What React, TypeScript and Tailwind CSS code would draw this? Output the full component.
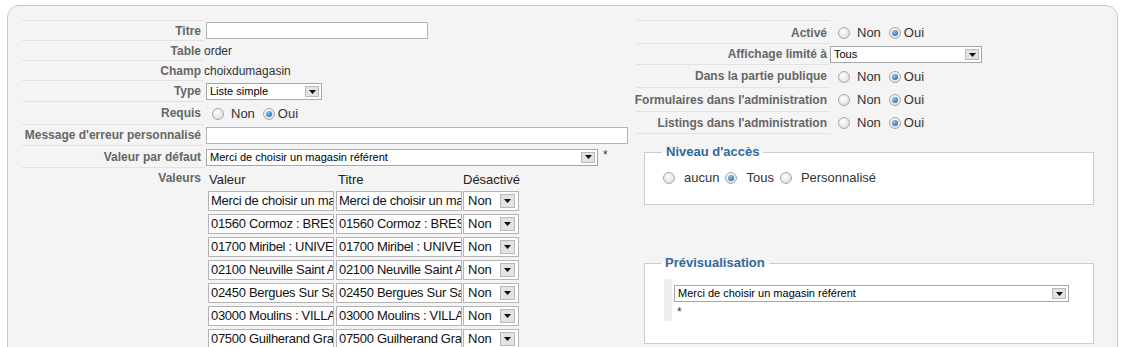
import React from "react";

const arial = "font-['Liberation_Sans',Arial,Helvetica,sans-serif]";

// Windows-style radio button
function Radio({ checked = false, className = "" }: { checked?: boolean; className?: string }) {
  return (
    <span
      className={`inline-flex shrink-0 items-center justify-center w-[12px] h-[12px] rounded-full border border-[#a9a9a9] bg-[radial-gradient(circle_at_40%_35%,#ffffff,#d6d6d6)] ${className}`}
    >
      {checked && (
        <span className="w-[6px] h-[6px] rounded-full bg-[radial-gradient(circle_at_35%_30%,#8ec3ee,#1b5c92)]" />
      )}
    </span>
  );
}

function Arrow({ big = false }: { big?: boolean }) {
  return (
    <span
      className={
        big
          ? "flex shrink-0 items-center justify-center w-[15px] h-[14px] mr-[2px] border border-[#b9b9b9] bg-[#e3e3e3]"
          : "flex shrink-0 items-center justify-center w-[14px] h-[11px] mr-[2px] border border-[#b9b9b9] bg-[#e3e3e3]"
      }
    >
      <svg width="7" height="4" viewBox="0 0 7 4">
        <path d="M0 0h7L3.5 4z" fill="#111" />
      </svg>
    </span>
  );
}

function Select({ value, className }: { value: string; className: string }) {
  return (
    <div className={`flex items-center bg-white border border-[#a7a7a7] h-[17px] ${className}`}>
      <span className="flex-1 pl-[3px] text-[11px] leading-none text-black whitespace-nowrap overflow-hidden">
        {value}
      </span>
      <Arrow />
    </div>
  );
}

function NonOui() {
  return (
    <div className="flex items-center ml-[8px] text-[13px] text-[#333]">
      <Radio />
      <span className="ml-[7px]">Non</span>
      <Radio checked className="ml-[8px]" />
      <span className="ml-[3px]">Oui</span>
    </div>
  );
}

const values = [
  "Merci de choisir un magasin référent",
  "01560 Cormoz : BRESSE",
  "01700 Miribel : UNIVERS",
  "02100 Neuville Saint Amand",
  "02450 Bergues Sur Sambre",
  "03000 Moulins : VILLARS",
  "07500 Guilherand Granges",
  "07700 Bourg Saint Andéol",
];

const leftRows = [
  {
    label: "Titre",
    cls: "h-[21px] border-t",
    content: <div className="ml-[2px] w-[222px] h-[17px] bg-white border border-[#b4b4b4]" />,
  },
  { label: "Table", cls: "h-[20px]", content: <span className="text-[12px] text-[#333]">order</span> },
  { label: "Champ", cls: "h-[20px]", content: <span className="text-[12px] text-[#333]">choixdumagasin</span> },
  { label: "Type", cls: "h-[21px]", content: <Select value="Liste simple" className="ml-[2px] w-[116px]" /> },
  { label: "Requis", cls: "h-[23px]", content: <NonOui /> },
  {
    label: "Message d'erreur personnalisé",
    cls: "h-[21px]",
    content: <div className="ml-[2px] w-[422px] h-[17px] bg-white border border-[#b4b4b4]" />,
  },
  {
    label: "Valeur par défaut",
    cls: "h-[22px]",
    content: (
      <div className="flex items-start">
        <Select value="Merci de choisir un magasin référent" className="ml-[2px] w-[392px]" />
        <span className="ml-[5px] text-[12px] leading-[12px] text-[#333]">*</span>
      </div>
    ),
  },
];

const rightRows = [
  { label: "Activé", cls: "h-[24px] border-t pt-[2px]", content: <NonOui /> },
  { label: "Affichage limité à", cls: "h-[21px]", content: <Select value="Tous" className="w-[152px]" /> },
  { label: "Dans la partie publique", cls: "h-[23px]", content: <NonOui /> },
  { label: "Formulaires dans l'administration", cls: "h-[24px]", content: <NonOui /> },
  { label: "Listings dans l'administration", cls: "h-[22px]", content: <NonOui /> },
];

export default function App() {
  return (
    <div className={`h-[347px] overflow-hidden bg-white ${arial}`}>
      <div className="ml-[7px] mt-[5px] w-[1111px] h-[400px] border border-[#c9c9c9] rounded-t-[12px] bg-[#f4f4f4] pl-[14px] pt-[14px] flex">
        {/* Left column */}
        <div className="w-[608px]">
          {leftRows.map((r) => (
            <div key={r.label} className="flex">
              <div
                className={`w-[182px] pr-[3px] flex items-center justify-end whitespace-nowrap text-[12px] font-bold text-[#666] border-b border-[#e2e2e2] ${r.cls}`}
              >
                {r.label}
              </div>
              <div className="flex items-center">{r.content}</div>
            </div>
          ))}
          <div className="flex">
            <div className="w-[182px] pr-[3px] pt-[3px] text-right text-[12px] leading-[14px] font-bold text-[#666]">
              Valeurs
            </div>
            <div className="pt-[2px] ml-[4px]">
              <div className="flex h-[20px] items-center text-[13px] text-[#222]">
                <span className="w-[128px] pl-[1px]">Valeur</span>
                <span className="w-[127px] pl-[2px]">Titre</span>
                <span>Désactivé</span>
              </div>
              {values.map((v, i) => (
                <div key={v} className={i === 0 ? "flex mt-[1px]" : "flex mt-[3px]"}>
                  <div className="w-[126px] h-[20px] bg-white border border-[#b4b4b4] pl-[2px] text-[13px] tracking-[-0.3px] leading-[18px] text-[#111] whitespace-nowrap overflow-hidden">
                    {v}
                  </div>
                  <div className="ml-[2px] w-[126px] h-[20px] bg-white border border-[#b4b4b4] pl-[2px] text-[13px] tracking-[-0.3px] leading-[18px] text-[#111] whitespace-nowrap overflow-hidden">
                    {v}
                  </div>
                  <div className="ml-[1px] w-[56px] h-[20px] flex items-center bg-white border border-[#b4b4b4]">
                    <span className="pl-[4px] w-[36px] text-[13px] text-[#111]">Non</span>
                    <Arrow big />
                  </div>
                </div>
              ))}
            </div>
          </div>
        </div>

        {/* Right column */}
        <div className="ml-[6px] w-[470px]">
          {rightRows.map((r) => (
            <div key={r.label} className="flex">
              <div
                className={`w-[194px] pr-[3px] flex items-center justify-end whitespace-nowrap text-[12px] font-bold text-[#666] border-b border-[#e2e2e2] ${r.cls}`}
              >
                {r.label}
              </div>
              <div className={r.label === "Activé" ? "flex items-center pt-[2px]" : "flex items-center"}>
                {r.content}
              </div>
            </div>
          ))}

          <fieldset className="mt-[10px] ml-[8px] w-[450px] border border-[#cccccc] bg-white pl-[18px] pt-[10px] pb-[18px]">
            <legend className="ml-[-1px] px-[4px] text-[13px] leading-[16px] font-bold text-[#30699d]">
              Niveau d'accès
            </legend>
            <div className="flex items-center h-[16px] text-[13px] text-[#333]">
              <Radio />
              <span className="ml-[9px]">aucun</span>
              <Radio checked className="ml-[6px]" />
              <span className="ml-[9px]">Tous</span>
              <Radio className="ml-[6px]" />
              <span className="ml-[9px]">Personnalisé</span>
            </div>
          </fieldset>

          <fieldset className="mt-[50px] ml-[8px] w-[450px] border border-[#cccccc] bg-white pl-[19px] pt-[8px] pb-[22px]">
            <legend className="ml-[-3px] px-[4px] text-[13px] leading-[16px] font-bold text-[#30699d]">
              Prévisualisation
            </legend>
            <div className="flex">
              <div className="w-[8px] h-[42px] bg-[#eeeeee]" />
              <div className="ml-[2px] pt-[6px]">
                <Select value="Merci de choisir un magasin référent" className="w-[395px]" />
                <div className="pl-[3px] pt-[3px] text-[12px] leading-[14px] text-[#333]">*</div>
              </div>
            </div>
          </fieldset>
        </div>
      </div>
    </div>
  );
}
